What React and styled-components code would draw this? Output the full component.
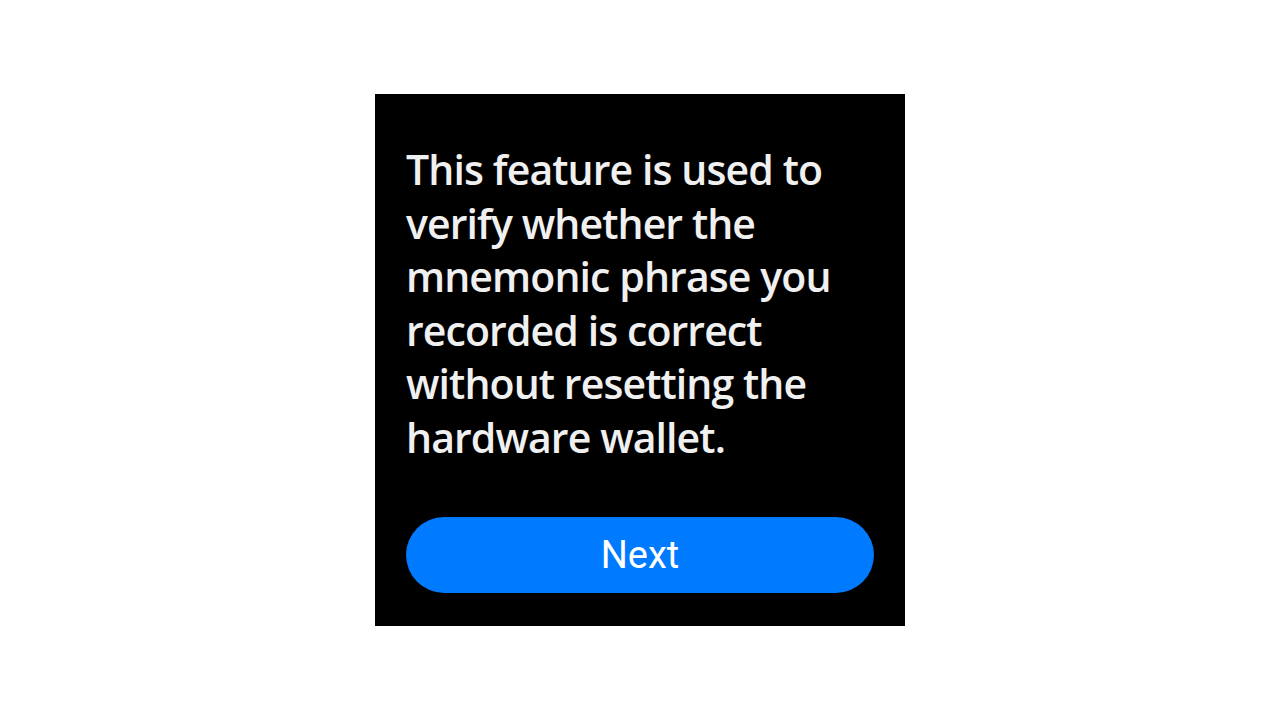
import React from "react";
import styled, { createGlobalStyle } from "styled-components";

const GlobalStyle = createGlobalStyle`
  html, body {
    margin: 0;
    padding: 0;
    background: #fff;
  }
`;

const Page = styled.div`
  height: 100vh;
  display: flex;
  align-items: center;
  justify-content: center;
`;

const Screen = styled.div`
  width: 530px;
  height: 532px;
  box-sizing: border-box;
  background: #000;
  padding: 49px 31px 33px;
  display: flex;
  flex-direction: column;
`;

const Message = styled.p`
  flex: 1;
  margin: 0;
  color: #f0f0f0;
  font-family: "Open Sans", "Noto Sans", sans-serif;
  font-size: 41px;
  font-weight: 600;
  line-height: 53.5px;
  letter-spacing: -0.9px;
`;

const NextButton = styled.button`
  height: 76px;
  width: 100%;
  border: none;
  border-radius: 38px;
  background: #007aff;
  color: #fff;
  font-family: Roboto, "Liberation Sans", sans-serif;
  font-size: 38px;
  cursor: pointer;
`;

const lines = [
  "This feature is used to",
  "verify whether the",
  "mnemonic phrase you",
  "recorded is correct",
  "without resetting the",
  "hardware wallet.",
];

export default function App() {
  return (
    <>
      <GlobalStyle />
      <Page>
        <Screen>
          <Message>
            {lines.map((l, i) => (
              <React.Fragment key={i}>
                {l}
                <br />
              </React.Fragment>
            ))}
          </Message>
          <NextButton>Next</NextButton>
        </Screen>
      </Page>
    </>
  );
}
